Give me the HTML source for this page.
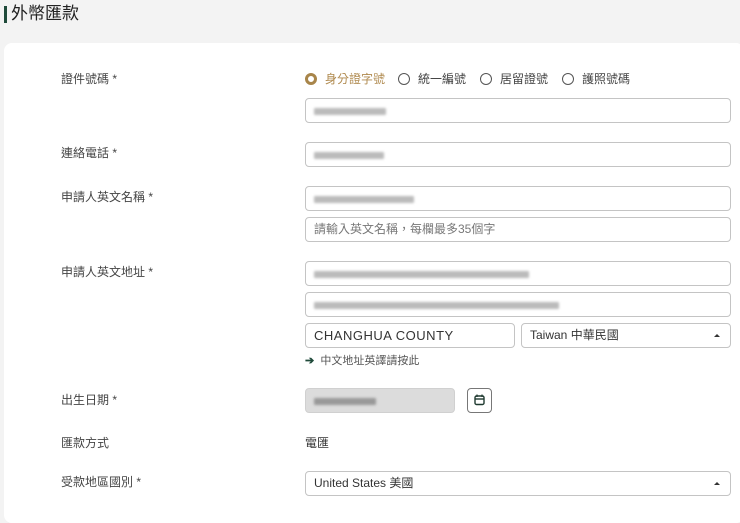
<!DOCTYPE html>
<html><head><meta charset="utf-8"><style>
*{box-sizing:border-box;margin:0;padding:0}
body{width:740px;height:505px;background:#f3f3f3;font-family:"Liberation Sans","Noto Sans CJK TC",sans-serif;position:relative;overflow:hidden;color:#333}
.a{position:absolute}
.card{left:4px;top:43px;width:740px;height:480px;background:#fff;border-radius:8px}
.lbl{position:absolute;left:61px;font-size:12px;color:#444;line-height:14px}
.in{position:absolute;left:305px;width:426px;height:25px;border:1px solid #c4c4c4;border-radius:4px;background:#fff;font-size:12px;line-height:23px;padding-left:8px;color:#555}
.bl{position:absolute;left:8px;top:9px;height:7px;background:#bbb;filter:blur(1.3px);border-radius:1px}
.r{position:absolute;top:72px;font-size:12px;line-height:14px;color:#444}
.rc{display:inline-block;width:12px;height:12px;border:1.3px solid #555;border-radius:50%;vertical-align:-2px;margin-right:8px}
.arr{position:absolute;right:10px;top:10px;border-left:3px solid transparent;border-right:3px solid transparent;border-bottom:3px solid #333}
</style></head><body>
<div class="a" style="left:4px;top:6px;width:3px;height:17px;background:#1f4a3a"></div>
<div class="a" style="left:11px;top:4px;font-size:17px;color:#222;line-height:20px">外幣匯款</div>
<div class="a card"></div>

<div class="lbl" style="top:72px">證件號碼 *</div>
<div class="r" style="left:305px;color:#b08a4f"><span class="rc" style="border:3.5px solid #a8854a"></span>身分證字號</div>
<div class="r" style="left:398px"><span class="rc"></span>統一編號</div>
<div class="r" style="left:480px"><span class="rc"></span>居留證號</div>
<div class="r" style="left:562px"><span class="rc"></span>護照號碼</div>
<div class="in" style="top:98px"><div class="bl" style="width:72px"></div></div>

<div class="lbl" style="top:146px">連絡電話 *</div>
<div class="in" style="top:142px"><div class="bl" style="width:70px"></div></div>

<div class="lbl" style="top:190px">申請人英文名稱 *</div>
<div class="in" style="top:186px"><div class="bl" style="width:100px"></div></div>
<div class="in" style="top:217px;color:#777">請輸入英文名稱，每欄最多35個字</div>

<div class="lbl" style="top:265px">申請人英文地址 *</div>
<div class="in" style="top:261px"><div class="bl" style="width:215px"></div></div>
<div class="in" style="top:292px"><div class="bl" style="width:245px"></div></div>
<div class="in" style="top:323px;width:210px;font-size:13px;color:#333;letter-spacing:.5px">CHANGHUA COUNTY</div>
<div class="in" style="top:323px;left:521px;width:210px;color:#333">Taiwan 中華民國<div class="arr"></div></div>
<div class="a" style="left:305px;top:354px;font-size:11px;color:#555;line-height:14px"><span style="color:#1f4a3a;font-weight:bold">➔</span>&nbsp; 中文地址英譯請按此</div>

<div class="lbl" style="top:393px">出生日期 *</div>
<div class="in" style="top:388px;width:150px;background:#dcdcdc;border-color:#d0d0d0"><div class="bl" style="width:62px;background:#999"></div></div>
<div class="a" style="left:467px;top:388px;width:25px;height:25px;border:1px solid #777;border-radius:4px;background:#fff">
<svg width="23" height="23" viewBox="0 0 23 23" style="position:absolute;left:0;top:0"><rect x="7" y="7" width="9" height="8.5" rx="1.5" fill="none" stroke="#1f3a30" stroke-width="1.4"/><line x1="7" y1="10" x2="16" y2="10" stroke="#1f3a30" stroke-width="1.4"/><line x1="9" y1="5.5" x2="9" y2="8" stroke="#1f3a30" stroke-width="1.2"/><line x1="14" y1="5.5" x2="14" y2="8" stroke="#1f3a30" stroke-width="1.2"/></svg></div>

<div class="lbl" style="top:436px">匯款方式</div>
<div class="a" style="left:305px;top:436px;font-size:12px;color:#333;line-height:14px">電匯</div>

<div class="lbl" style="top:475px">受款地區國別 *</div>
<div class="in" style="top:471px;color:#333">United States 美國<div class="arr"></div></div>
</body></html>
